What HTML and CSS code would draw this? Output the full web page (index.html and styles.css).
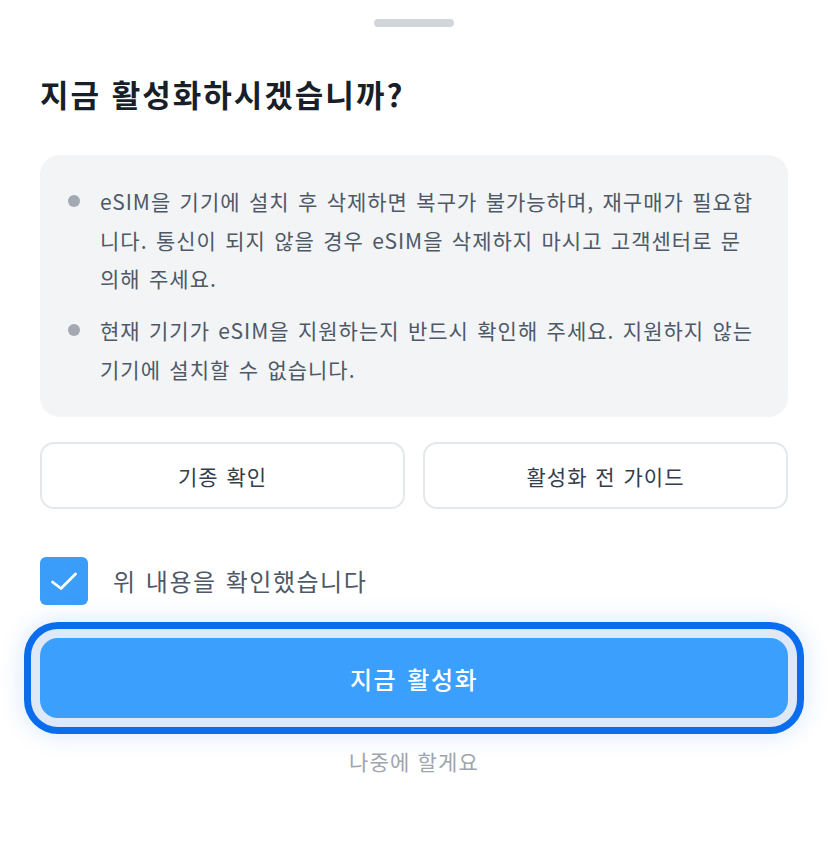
FILE: index.html
```html
<!DOCTYPE html>
<html lang="ko">
<head>
<meta charset="utf-8">
<link rel="stylesheet" href="styles.css">
</head>
<body>
<div class="sheet">
  <div class="handle"></div>
  <h1 class="title">지금 활성화하시겠습니까?</h1>
  <div class="info">
    <div class="item"><span class="dot"></span><p>eSIM을 기기에 설치 후 삭제하면 복구가 불가능하며, 재구매가 필요합니다. 통신이 되지 않을 경우 eSIM을 삭제하지 마시고 고객센터로 문의해 주세요.</p></div>
    <div class="item"><span class="dot"></span><p>현재 기기가 eSIM을 지원하는지 반드시 확인해 주세요. 지원하지 않는 기기에 설치할 수 없습니다.</p></div>
  </div>
  <div class="btns">
    <button class="sub">기종 확인</button>
    <button class="sub">활성화 전 가이드</button>
  </div>
  <label class="check">
    <span class="box"><svg width="48" height="48" viewBox="0 0 48 48"><path d="M12.5 25 L21 31.5 L35.5 17" fill="none" stroke="#fff" stroke-width="2.8" stroke-linecap="round" stroke-linejoin="round"/></svg></span>
    <span class="label">위 내용을 확인했습니다</span>
  </label>
  <button class="main">지금 활성화</button>
  <div class="later">나중에 할게요</div>
</div>
</body>
</html>
```
FILE: styles.css
```css
* { box-sizing: border-box; }
html, body { margin: 0; padding: 0; background: #fff; }
body { font-family: "Noto Sans CJK KR", "Noto Sans", sans-serif; }
.sheet { padding: 19px 40px 0; display: flex; flex-direction: column; }
.handle { width: 80px; height: 8px; border-radius: 4px; background: #d1d6db; align-self: center; }
.title { margin: 47px 0 0; font-size: 31px; line-height: 40px; font-weight: 700; color: #191f28; letter-spacing: 2px; }
.info { margin-top: 41px; background: #f2f4f6; border-radius: 20px; padding: 27px 28px 29px 28px; display: flex; flex-direction: column; gap: 13.5px; }
.item { display: flex; align-items: flex-start; }
.dot { flex: none; width: 12px; height: 12px; border-radius: 50%; background: #a2a9b2; margin-top: 13px; margin-right: 20px; }
.item p { margin: 0; font-size: 21px; line-height: 38.5px; color: #4e5968; letter-spacing: 1px; word-spacing: 1.5px; }
.btns { margin-top: 25px; display: flex; gap: 18px; }
.sub { flex: 1; height: 67px; border: 2px solid #e5e8eb; border-radius: 14px; background: #fff; font-family: inherit; font-size: 21px; color: #333d4b; padding: 0; letter-spacing: 1px; word-spacing: 1px; }
.check { margin-top: 48px; display: flex; align-items: center; gap: 25px; }
.box { width: 48px; height: 48px; border-radius: 6px; background: #3a9df9; display: block; }
.box svg { display: block; }
.label { font-size: 24px; color: #4e5968; line-height: 48px; letter-spacing: 1.5px; word-spacing: 1px; }
.main { margin-top: 33px; height: 80px; border: none; border-radius: 18px; background: #3a9ffd; color: #fff; font-family: inherit; font-size: 24px; font-weight: 500; letter-spacing: 1.5px; word-spacing: 2px; box-shadow: 0 0 0 9px #dfe8f7, 0 0 0 16px #0a6ded, 0 0 24px 18px rgba(10, 109, 237, 0.14); }
.later { margin-top: 28px; text-align: center; font-size: 21px; line-height: 30px; color: #9ea5ae; letter-spacing: 1.2px; }
```
